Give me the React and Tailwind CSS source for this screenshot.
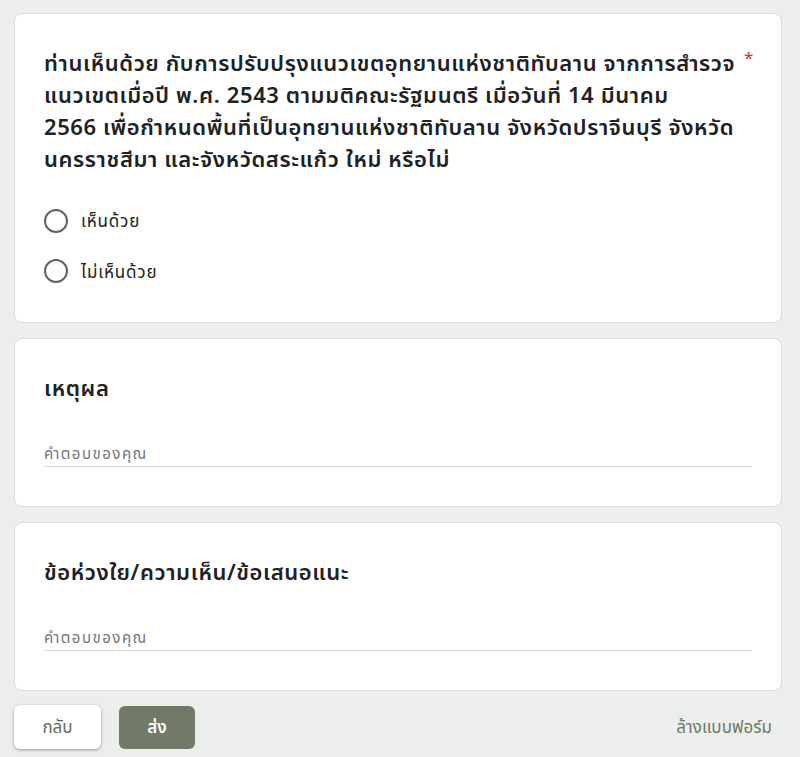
export default function App() {
  const font = { fontFamily: '"Noto Sans", "Noto Sans Thai", Tahoma, sans-serif' };
  return (
    <div className="min-h-[757px] w-[800px] bg-[#eceeeb] pl-[14px] pr-[18px] pt-[13px]" style={font}>
      <div className="flex flex-col gap-[15px]">
        <div className="h-[310px] rounded-lg border border-[#dadce0] bg-white pl-[29px] pr-[28px] pt-[32px]">
          <div className="relative whitespace-nowrap text-[22px] font-semibold leading-[32px] tracking-[0.6px] text-[#202124]">
            <span>
              ท่านเห็นด้วย กับการปรับปรุงแนวเขตอุทยานแห่งชาติทับลาน จากการสำรวจ
              <br />
              แนวเขตเมื่อปี พ.ศ. 2543 ตามมติคณะรัฐมนตรี เมื่อวันที่ 14 มีนาคม
              <br />
              2566 เพื่อกำหนดพื้นที่เป็นอุทยานแห่งชาติทับลาน จังหวัดปราจีนบุรี จังหวัด
              <br />
              นครราชสีมา และจังหวัดสระแก้ว ใหม่ หรือไม่
            </span>
            <span className="absolute left-[700px] top-[-4px] text-[17px] font-normal text-[#d93025]">*</span>
          </div>
          <div className="mt-[34px] flex flex-col gap-[25px]">
            {["เห็นด้วย", "ไม่เห็นด้วย"].map((t) => (
              <div key={t} className="flex items-center gap-[13px]">
                <div className="h-[24px] w-[24px] rounded-full border-2 border-[#5f6368]" />
                <span className="text-[17px] tracking-[0.8px] text-[#202124]">{t}</span>
              </div>
            ))}
          </div>
        </div>
        {["เหตุผล", "ข้อห่วงใย/ความเห็น/ข้อเสนอแนะ"].map((t) => (
          <div key={t} className="h-[169px] rounded-lg border border-[#dadce0] bg-white pl-[29px] pr-[29px] pt-[32px]">
            <div className="text-[22px] font-semibold leading-[32px] tracking-[0.6px] text-[#202124]">{t}</div>
            <div className="mt-[38px] border-b border-[#dadce0] pb-[1px] text-[15px] leading-[24px] tracking-[1.5px] text-[#70757a]">
              คำตอบของคุณ
            </div>
          </div>
        ))}
      </div>
      <div className="mt-[14px] flex items-center">
        <button className="h-[44px] w-[87px] rounded-md bg-white text-[17px] text-[#5f6b55] shadow-[0_1px_2px_rgba(60,64,67,0.3),0_1px_3px_1px_rgba(60,64,67,0.15)]">
          กลับ
        </button>
        <button className="ml-[18px] h-[43px] w-[76px] rounded-md bg-[#717a66] text-[17px] font-semibold text-white">
          ส่ง
        </button>
        <span className="ml-auto mr-[10px] text-[17px] text-[#6f7866]">ล้างแบบฟอร์ม</span>
      </div>
    </div>
  );
}
